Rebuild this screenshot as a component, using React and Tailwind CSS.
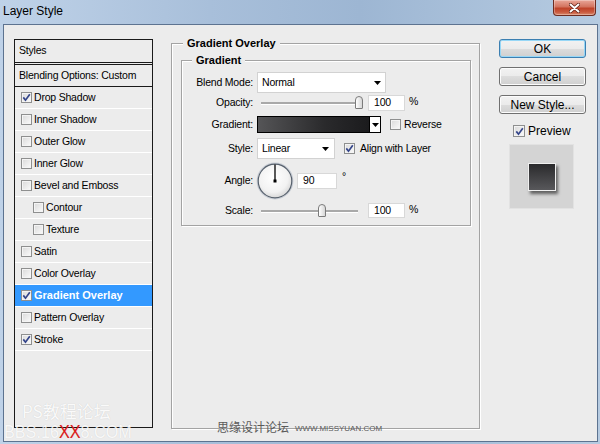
import React from "react";

function Box({ checked, big }) {
  return (
    <span
      className={
        "flex shrink-0 items-center justify-center border border-[#8e8f8f] bg-[linear-gradient(135deg,#d9d9d9,#fbfbfb)] shadow-[inset_0_0_0_1px_#f4f4f4] " +
        (big ? "h-[12px] w-[12px]" : "h-[11px] w-[11px]")
      }
    >
      {checked && (
        <svg width="9" height="9" viewBox="0 0 9 9">
          <path d="M1.3 4.4 L3.5 7.2 L7.8 1.3" fill="none" stroke="#34458a" strokeWidth="1.7" />
        </svg>
      )}
    </span>
  );
}

function Tri() {
  return (
    <svg width="7" height="4" viewBox="0 0 7 4">
      <path d="M0 0H7L3.5 4Z" fill="#000" />
    </svg>
  );
}

function Thumb() {
  return (
    <span className="absolute top-[-6px] h-[13px] w-[8px] rounded-t-[4px] rounded-b-[1px] border border-[#7b7b7b] bg-[linear-gradient(to_right,#ffffff,#d6d6d6)]" />
  );
}

export default function App() {
  const items = [
    { label: "Drop Shadow", checked: true },
    { label: "Inner Shadow" },
    { label: "Outer Glow" },
    { label: "Inner Glow" },
    { label: "Bevel and Emboss" },
    { label: "Contour", indent: true },
    { label: "Texture", indent: true },
    { label: "Satin" },
    { label: "Color Overlay" },
    { label: "Gradient Overlay", checked: true, active: true },
    { label: "Pattern Overlay" },
    { label: "Stroke", checked: true },
  ];

  return (
    <div className="relative flex h-[444px] w-[600px] flex-col overflow-hidden bg-[linear-gradient(to_right,#bfd2e8,#a8bfda_35%,#9db6d3_60%,#b6cbe1)] font-['Liberation_Sans',Arial,sans-serif] text-[10.5px] tracking-[-0.2px] text-black">
      {/* title bar */}
      <div className="flex h-[24px] shrink-0 items-start justify-between pl-[3px] pr-[4px]">
        <span className="mt-[4px] text-[12px] leading-[15px] tracking-normal">Layer Style</span>
        <div className="flex h-[16px] w-[43px] items-center justify-center rounded-b-[4px] border border-t-0 border-[#6e2c20] bg-[linear-gradient(to_bottom,#e9a698,#d3745f_45%,#bf4329_55%,#c9593e_80%,#d98a6c)] shadow-[inset_0_0_0_1px_rgba(255,255,255,0.3)]">
          <svg width="11" height="10" viewBox="0 0 11 10">
            <path d="M1.5 1.5 L9.5 8.5 M9.5 1.5 L1.5 8.5" stroke="#5a1c12" strokeWidth="3.4" strokeLinecap="round" />
            <path d="M1.5 1.5 L9.5 8.5 M9.5 1.5 L1.5 8.5" stroke="#ffffff" strokeWidth="2" strokeLinecap="round" />
          </svg>
        </div>
      </div>

      {/* client area */}
      <div className="ml-[3px] mr-[2px] flex h-[418px] shrink-0 border border-[#5d7390] bg-[#ececec] pl-[10px]">
        {/* styles list */}
        <div className="mt-[14px] flex h-[389px] w-[139px] flex-col border border-[#1a1a1a]">
          <div className="flex h-[23px] items-center border-b border-[#1a1a1a] pl-[4px]">Styles</div>
          <div className="mt-[1px] flex h-[23px] items-center border-y border-[#1a1a1a] pl-[4px]">
            Blending Options: Custom
          </div>
          {items.map((it) => (
            <div
              key={it.label}
              className={
                "flex h-[22px] items-center gap-[2px] border-b border-white " +
                (it.indent ? "pl-[18px] " : "pl-[6px] ") +
                (it.active ? "bg-[#3399ff] text-[11px] font-bold tracking-normal text-white" : "")
              }
            >
              <Box checked={it.checked} />
              <span>{it.label}</span>
            </div>
          ))}
        </div>

        {/* Gradient Overlay group */}
        <div className="relative ml-[18px] mt-[18px] h-[386px] w-[309px] border border-[#a3a3a3] shadow-[inset_1px_1px_0_#fff,1px_1px_0_#fff]">
          <span className="absolute left-[11px] top-[-8px] bg-[#ececec] px-[4px] text-[11px] font-bold leading-[14px] tracking-normal">
            Gradient Overlay
          </span>

          <div className="relative ml-[9px] mt-[16px] flex h-[166px] w-[290px] flex-col border border-[#a3a3a3] pt-[11px] shadow-[inset_1px_1px_0_#fff,1px_1px_0_#fff]">
            <span className="absolute left-[10px] top-[-8px] bg-[#ececec] px-[4px] text-[11px] font-bold leading-[14px] tracking-normal">
              Gradient
            </span>

            {/* Blend mode */}
            <div className="flex h-[21px] items-center">
              <span className="w-[71px] text-right">Blend Mode:</span>
              <div className="ml-[4px] flex h-[21px] w-[129px] items-center justify-between border border-[#d2d2d2] bg-white pl-[4px] pr-[4px]">
                <span>Normal</span>
                <Tri />
              </div>
            </div>

            {/* Opacity */}
            <div className="mt-[2px] flex h-[16px] items-center">
              <span className="w-[71px] text-right">Opacity:</span>
              <div className="relative ml-[8px] h-[2px] w-[102px] bg-[#a9a9a9] shadow-[0_1px_0_#fff]">
                <span className="absolute left-[94px] top-0">
                  <Thumb />
                </span>
              </div>
              <div className="ml-[5px] flex h-[16px] w-[37px] items-center border border-[#d8d8d8] bg-white pl-[5px]">100</div>
              <span className="ml-[4px] self-start leading-[12px]">%</span>
            </div>

            {/* Gradient */}
            <div className="mt-[5px] flex h-[17px] items-center">
              <span className="w-[71px] text-right">Gradient:</span>
              <div className="ml-[4px] flex h-[17px] w-[124px] border border-black">
                <div className="flex-1 border-r border-black bg-[linear-gradient(to_right,#555557,#2a2a2c_60%,#1b1b1d)]" />
                <div className="flex w-[10px] items-center justify-center bg-white">
                  <Tri />
                </div>
              </div>
              <span className="ml-[9px]">
                <Box />
              </span>
              <span className="ml-[3px]">Reverse</span>
            </div>

            {/* Style */}
            <div className="mt-[5px] flex h-[21px] items-center">
              <span className="w-[71px] text-right">Style:</span>
              <div className="ml-[4px] flex h-[21px] w-[78px] items-center justify-between border border-[#d2d2d2] bg-white pl-[4px] pr-[5px]">
                <span>Linear</span>
                <Tri />
              </div>
              <span className="ml-[9px]">
                <Box checked />
              </span>
              <span className="ml-[5px]">Align with Layer</span>
            </div>

            {/* Angle */}
            <div className="mt-[3px] flex h-[37px] items-center">
              <span className="w-[71px] text-right">Angle:</span>
              <svg className="ml-[3px]" width="38" height="38" viewBox="0 0 38 38">
                <defs>
                  <radialGradient id="dialg" cx="45%" cy="40%" r="62%">
                    <stop offset="0" stopColor="#ffffff" />
                    <stop offset="0.7" stopColor="#f2f2f2" />
                    <stop offset="1" stopColor="#d6d6d6" />
                  </radialGradient>
                </defs>
                <circle cx="19" cy="19" r="17.8" fill="none" stroke="#c9ced6" strokeWidth="1.2" />
                <circle cx="19" cy="19" r="16.8" fill="url(#dialg)" stroke="#56606c" strokeWidth="1.2" />
                <line x1="19" y1="19" x2="19" y2="2.5" stroke="#000" strokeWidth="1.3" />
                <rect x="17.5" y="17.5" width="3" height="3" fill="#000" />
              </svg>
              <div className="ml-[3px] flex h-[16px] w-[40px] items-center border border-[#d8d8d8] bg-white pl-[5px]">90</div>
              <span className="ml-[5px] mb-[8px]">°</span>
            </div>

            {/* Scale */}
            <div className="mt-[4px] flex h-[15px] items-center">
              <span className="w-[71px] text-right">Scale:</span>
              <div className="relative ml-[8px] h-[2px] w-[97px] bg-[#a9a9a9] shadow-[0_1px_0_#fff]">
                <span className="absolute left-[57px] top-0">
                  <Thumb />
                </span>
              </div>
              <div className="ml-[10px] flex h-[15px] w-[37px] items-center border border-[#d8d8d8] bg-white pl-[5px]">100</div>
              <span className="ml-[4px] self-start leading-[12px]">%</span>
            </div>
          </div>
        </div>

        {/* right column */}
        <div className="ml-[19px] mt-[14px] flex w-[87px] flex-col text-[12px] tracking-normal">
          <div className="flex h-[19px] items-center justify-center rounded-[3px] border border-[#3c7fb1] bg-[linear-gradient(to_bottom,#f2f2f2,#ebebeb_50%,#dddddd_50%,#cfcfcf)] shadow-[inset_0_0_0_1px_#97d7f6]">
            OK
          </div>
          <div className="mt-[9px] flex h-[19px] items-center justify-center rounded-[3px] border border-[#707070] bg-[linear-gradient(to_bottom,#f2f2f2,#ebebeb_50%,#dddddd_50%,#cfcfcf)] shadow-[inset_0_0_0_1px_#fcfcfc]">
            Cancel
          </div>
          <div className="mt-[9px] flex h-[19px] items-center justify-center rounded-[3px] border border-[#707070] bg-[linear-gradient(to_bottom,#f2f2f2,#ebebeb_50%,#dddddd_50%,#cfcfcf)] shadow-[inset_0_0_0_1px_#fcfcfc]">
            New Style...
          </div>
          <div className="mt-[10px] flex h-[14px] items-center pl-[14px]">
            <Box checked big />
            <span className="ml-[3px]">Preview</span>
          </div>
          <div className="ml-[10px] mt-[6px] flex h-[65px] w-[65px] items-center justify-center border border-[#e2e2e2] bg-[#d4d4d4]">
            <div className="h-[28px] w-[28px] border border-[#f0f0f0] bg-[linear-gradient(to_top,#58585b,#2a2a2c)] shadow-[2px_3px_3px_rgba(0,0,0,0.55)]" />
          </div>
        </div>
      </div>

      {/* watermarks */}
      <span className="absolute left-[22px] top-[402px] font-['Noto_Sans_CJK_SC',sans-serif] text-[17px] leading-none tracking-normal text-white/90 [text-shadow:0_0_1px_rgba(0,0,0,0.18)]">
        PS教程论坛
      </span>
      <span className="absolute left-[4px] top-[423px] origin-left scale-x-[0.9] text-[18px] leading-none tracking-normal text-white/85 [text-shadow:0_0_1px_rgba(0,0,0,0.15)]">
        BBS.16<span className="text-[#e01818]">XX</span>8.COM
      </span>
      <span className="absolute left-[217px] top-[421px] font-['Noto_Sans_CJK_SC',sans-serif] text-[12px] leading-none tracking-normal text-[#5a5a5a]">
        思缘设计论坛
      </span>
      <span className="absolute left-[295px] top-[425px] text-[8px] leading-none tracking-normal text-[#5a5a5a]">WWW.MISSYUAN.COM</span>
    </div>
  );
}
